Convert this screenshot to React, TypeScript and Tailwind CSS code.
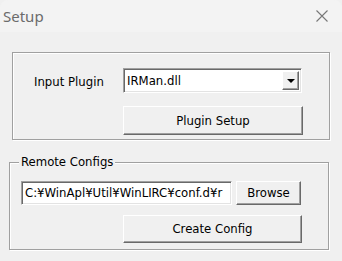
import React from 'react';

const font = { fontFamily: '"DejaVu Sans Condensed", "DejaVu Sans", "Noto Sans CJK JP", sans-serif' };

const raised =
  'bg-[#f0f0f0] border border-t-white border-l-white border-r-[#696969] border-b-[#696969] shadow-[inset_-1px_-1px_0_#a0a0a0]';
const sunken =
  'bg-white border border-t-[#a0a0a0] border-l-[#a0a0a0] border-r-white border-b-white shadow-[inset_1px_1px_0_#696969,inset_-1px_-1px_0_#e3e3e3]';
const etched = 'border border-[#a0a0a0] shadow-[inset_1px_1px_0_#fff,1px_1px_0_#fff]';

function Button({ label, className }: { label: string; className: string }) {
  return (
    <div className={`${raised} ${className} flex items-center justify-center text-[13px] text-black`}>
      {label}
    </div>
  );
}

export default function App() {
  return (
    <div className="w-[342px] h-[261px] bg-[#f0f0f0] overflow-hidden" style={font}>
      {/* title bar */}
      <div className="h-[32px] bg-[#f3f3f3] rounded-t-[8px] flex items-center justify-between pl-[3px] pr-[13px]">
        <span className="text-[15px] text-[#6b6b6b]" style={{ fontFamily: '"Noto Sans", sans-serif' }}>
          Setup
        </span>
        <svg width="14" height="14" viewBox="0 0 14 14" className="text-[#777]">
          <path d="M1.5 1.5 L12.5 12.5 M12.5 1.5 L1.5 12.5" stroke="currentColor" strokeWidth="1.1" />
        </svg>
      </div>

      {/* group 1 */}
      <div className={`${etched} ml-[12px] mt-[20px] w-[318px] h-[88px] pt-[15px] pl-[21px]`}>
        <div className="flex items-start">
          <span className="w-[89px] pt-[4px] text-[13px] text-black">Input Plugin</span>
          <div className={`${sunken} w-[179px] h-[25px] flex items-center pl-[3px] pr-[2px]`}>
            <span className="flex-1 text-[13px] text-black">IRMan.dll</span>
            <div className={`${raised} w-[17px] h-[19px] flex items-center justify-center`}>
              <svg width="8" height="4" viewBox="0 0 8 4">
                <path d="M0 0 H8 L4 4 Z" fill="#000" />
              </svg>
            </div>
          </div>
        </div>
        <Button label="Plugin Setup" className="ml-[89px] mt-[13px] w-[180px] h-[29px]" />
      </div>

      {/* group 2 */}
      <div className={`${etched} relative ml-[9px] mt-[22px] w-[320px] h-[88px] pt-[18px] pl-[11px]`}>
        <span className="absolute left-[9px] top-[-9px] px-[2px] bg-[#f0f0f0] text-[13px] text-black leading-[16px]">
          Remote Configs
        </span>
        <div className="flex items-center gap-[4px]">
          <div className={`${sunken} w-[211px] h-[24px] flex items-center pl-[3px] overflow-hidden`}>
            <span className="whitespace-nowrap text-[13px] text-black">C:¥WinApl¥Util¥WinLIRC¥conf.d¥r</span>
          </div>
          <Button label="Browse" className="w-[65px] h-[24px]" />
        </div>
        <Button label="Create Config" className="ml-[102px] mt-[10px] w-[179px] h-[28px]" />
      </div>
    </div>
  );
}
